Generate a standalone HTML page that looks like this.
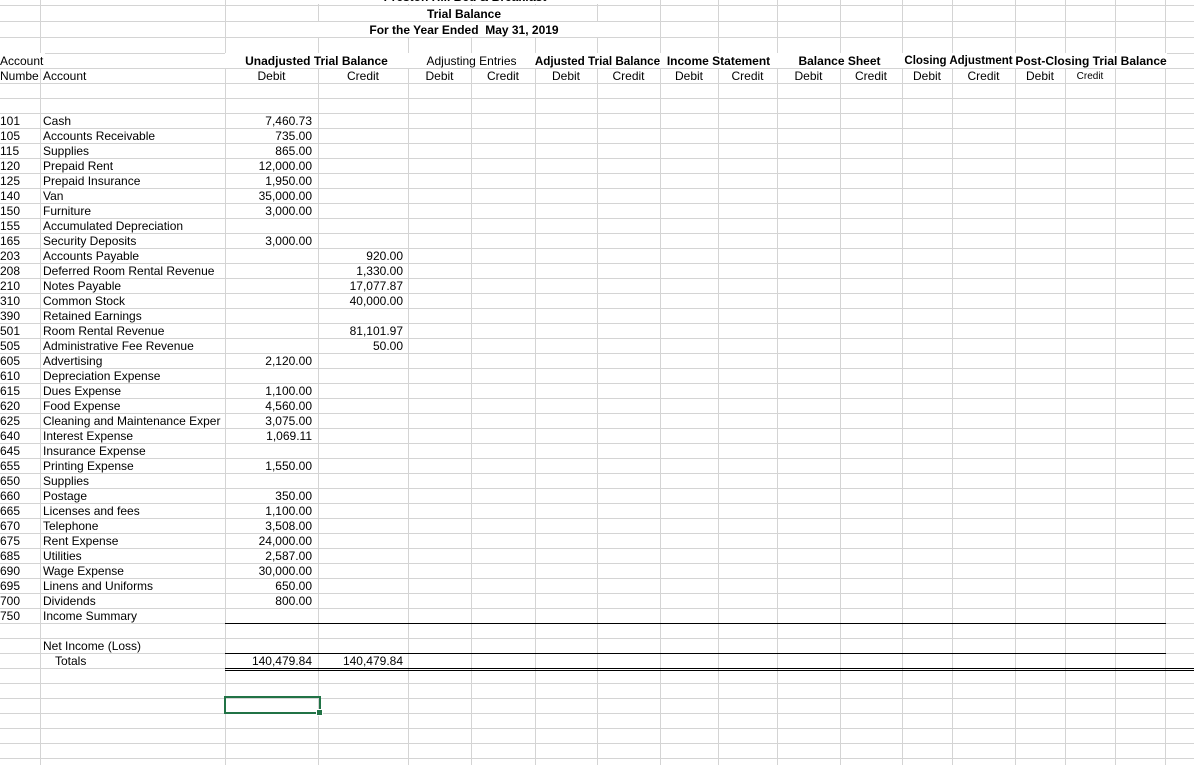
<!DOCTYPE html>
<html><head><meta charset="utf-8"><style>
body{margin:0;width:1194px;height:765px;overflow:hidden;background:#fff;font-family:"Liberation Sans",Arial,sans-serif;font-size:12px;color:#000;position:relative}
.h{position:absolute;left:0;width:1194px;height:1px;background:#d4d4d4}
.v{position:absolute;top:0;height:765px;width:1px;background:#d4d4d4}
.g{position:absolute;left:0;top:53px;width:1194px;height:712px;background:repeating-linear-gradient(to bottom,#d4d4d4 0 1px,transparent 1px 15px)}
.t{position:absolute;height:15px;line-height:17px;white-space:nowrap}
.r{text-align:right}.c{text-align:center}.b{font-weight:bold}
.k{position:absolute;height:1px;background:#000}
</style></head><body>
<div class="g"></div>
<div class="h" style="top:5px"></div><div class="h" style="top:21px"></div><div class="h" style="top:37px"></div>
<div class="v" style="left:40px"></div><div class="v" style="left:225px"></div><div class="v" style="left:318px"></div><div class="v" style="left:408px"></div><div class="v" style="left:471px"></div><div class="v" style="left:535px"></div><div class="v" style="left:597px"></div><div class="v" style="left:660px"></div><div class="v" style="left:718px"></div><div class="v" style="left:777px"></div><div class="v" style="left:840px"></div><div class="v" style="left:902px"></div><div class="v" style="left:952px"></div><div class="v" style="left:1015px"></div><div class="v" style="left:1065px"></div><div class="v" style="left:1115px"></div><div class="v" style="left:1165px"></div>

<div class="t b c" style="left:300px;width:330px;top:-11px;background:#fff">Preston Hill Bed &amp; Breakfast</div>
<div class="t b c" style="left:364px;width:200px;top:6px;background:#fff">Trial Balance</div>
<div class="t b c" style="left:314px;width:300px;top:22px;background:#fff">For the Year Ended&nbsp; May 31, 2019</div>

<div class="t" style="left:0;top:53px;background:#fff;padding-right:2px">Account</div>
<div class="t" style="left:0;top:68px">Numbe</div><div class="t" style="left:43px;top:68px">Account</div>
<div class="t b c" style="left:225px;width:183px;top:53px;background:#fff">Unadjusted Trial Balance</div>
<div class="t c" style="left:225px;width:93px;top:68px">Debit</div><div class="t c" style="left:318px;width:90px;top:68px">Credit</div>
<div class="t c" style="left:408px;width:127px;top:53px;background:#fff">Adjusting Entries</div>
<div class="t b c" style="left:531px;width:133px;top:53px;background:#fff;font-size:11.7px">Adjusted Trial Balance</div>
<div class="t b c" style="left:660px;width:117px;top:53px;background:#fff">Income Statement</div>
<div class="t b c" style="left:777px;width:125px;top:53px;background:#fff">Balance Sheet</div>
<div class="t b c" style="left:902px;width:113px;top:53px;background:#fff;font-size:11.5px">Closing Adjustment</div>
<div class="t b c" style="left:1015px;width:152px;top:53px;background:#fff">Post-Closing Trial Balance</div>
<div class="t c" style="left:408px;width:63px;top:68px">Debit</div><div class="t c" style="left:471px;width:64px;top:68px">Credit</div>
<div class="t c" style="left:535px;width:62px;top:68px">Debit</div><div class="t c" style="left:597px;width:63px;top:68px">Credit</div>
<div class="t c" style="left:660px;width:58px;top:68px">Debit</div><div class="t c" style="left:718px;width:59px;top:68px">Credit</div>
<div class="t c" style="left:777px;width:63px;top:68px">Debit</div><div class="t c" style="left:840px;width:62px;top:68px">Credit</div>
<div class="t c" style="left:902px;width:50px;top:68px">Debit</div><div class="t c" style="left:952px;width:63px;top:68px">Credit</div>
<div class="t c" style="left:1015px;width:50px;top:68px">Debit</div><div class="t c" style="left:1065px;width:50px;top:68px;font-size:10px">Credit</div>

<div class="t" style="left:0;top:113px">101</div><div class="t" style="left:43px;top:113px">Cash</div><div class="t r" style="left:225px;width:87px;top:113px">7,460.73</div>
<div class="t" style="left:0;top:128px">105</div><div class="t" style="left:43px;top:128px">Accounts Receivable</div><div class="t r" style="left:225px;width:87px;top:128px">735.00</div>
<div class="t" style="left:0;top:143px">115</div><div class="t" style="left:43px;top:143px">Supplies</div><div class="t r" style="left:225px;width:87px;top:143px">865.00</div>
<div class="t" style="left:0;top:158px">120</div><div class="t" style="left:43px;top:158px">Prepaid Rent</div><div class="t r" style="left:225px;width:87px;top:158px">12,000.00</div>
<div class="t" style="left:0;top:173px">125</div><div class="t" style="left:43px;top:173px">Prepaid Insurance</div><div class="t r" style="left:225px;width:87px;top:173px">1,950.00</div>
<div class="t" style="left:0;top:188px">140</div><div class="t" style="left:43px;top:188px">Van</div><div class="t r" style="left:225px;width:87px;top:188px">35,000.00</div>
<div class="t" style="left:0;top:203px">150</div><div class="t" style="left:43px;top:203px">Furniture</div><div class="t r" style="left:225px;width:87px;top:203px">3,000.00</div>
<div class="t" style="left:0;top:218px">155</div><div class="t" style="left:43px;top:218px">Accumulated Depreciation</div>
<div class="t" style="left:0;top:233px">165</div><div class="t" style="left:43px;top:233px">Security Deposits</div><div class="t r" style="left:225px;width:87px;top:233px">3,000.00</div>
<div class="t" style="left:0;top:248px">203</div><div class="t" style="left:43px;top:248px">Accounts Payable</div><div class="t r" style="left:318px;width:85px;top:248px">920.00</div>
<div class="t" style="left:0;top:263px">208</div><div class="t" style="left:43px;top:263px">Deferred Room Rental Revenue</div><div class="t r" style="left:318px;width:85px;top:263px">1,330.00</div>
<div class="t" style="left:0;top:278px">210</div><div class="t" style="left:43px;top:278px">Notes Payable</div><div class="t r" style="left:318px;width:85px;top:278px">17,077.87</div>
<div class="t" style="left:0;top:293px">310</div><div class="t" style="left:43px;top:293px">Common Stock</div><div class="t r" style="left:318px;width:85px;top:293px">40,000.00</div>
<div class="t" style="left:0;top:308px">390</div><div class="t" style="left:43px;top:308px">Retained Earnings</div>
<div class="t" style="left:0;top:323px">501</div><div class="t" style="left:43px;top:323px">Room Rental Revenue</div><div class="t r" style="left:318px;width:85px;top:323px">81,101.97</div>
<div class="t" style="left:0;top:338px">505</div><div class="t" style="left:43px;top:338px">Administrative Fee Revenue</div><div class="t r" style="left:318px;width:85px;top:338px">50.00</div>
<div class="t" style="left:0;top:353px">605</div><div class="t" style="left:43px;top:353px">Advertising</div><div class="t r" style="left:225px;width:87px;top:353px">2,120.00</div>
<div class="t" style="left:0;top:368px">610</div><div class="t" style="left:43px;top:368px">Depreciation Expense</div>
<div class="t" style="left:0;top:383px">615</div><div class="t" style="left:43px;top:383px">Dues Expense</div><div class="t r" style="left:225px;width:87px;top:383px">1,100.00</div>
<div class="t" style="left:0;top:398px">620</div><div class="t" style="left:43px;top:398px">Food Expense</div><div class="t r" style="left:225px;width:87px;top:398px">4,560.00</div>
<div class="t" style="left:0;top:413px">625</div><div class="t" style="left:43px;top:413px;width:181px;overflow:hidden">Cleaning and Maintenance Exper</div><div class="t r" style="left:225px;width:87px;top:413px">3,075.00</div>
<div class="t" style="left:0;top:428px">640</div><div class="t" style="left:43px;top:428px">Interest Expense</div><div class="t r" style="left:225px;width:87px;top:428px">1,069.11</div>
<div class="t" style="left:0;top:443px">645</div><div class="t" style="left:43px;top:443px">Insurance Expense</div>
<div class="t" style="left:0;top:458px">655</div><div class="t" style="left:43px;top:458px">Printing Expense</div><div class="t r" style="left:225px;width:87px;top:458px">1,550.00</div>
<div class="t" style="left:0;top:473px">650</div><div class="t" style="left:43px;top:473px">Supplies</div>
<div class="t" style="left:0;top:488px">660</div><div class="t" style="left:43px;top:488px">Postage</div><div class="t r" style="left:225px;width:87px;top:488px">350.00</div>
<div class="t" style="left:0;top:503px">665</div><div class="t" style="left:43px;top:503px">Licenses and fees</div><div class="t r" style="left:225px;width:87px;top:503px">1,100.00</div>
<div class="t" style="left:0;top:518px">670</div><div class="t" style="left:43px;top:518px">Telephone</div><div class="t r" style="left:225px;width:87px;top:518px">3,508.00</div>
<div class="t" style="left:0;top:533px">675</div><div class="t" style="left:43px;top:533px">Rent Expense</div><div class="t r" style="left:225px;width:87px;top:533px">24,000.00</div>
<div class="t" style="left:0;top:548px">685</div><div class="t" style="left:43px;top:548px">Utilities</div><div class="t r" style="left:225px;width:87px;top:548px">2,587.00</div>
<div class="t" style="left:0;top:563px">690</div><div class="t" style="left:43px;top:563px">Wage Expense</div><div class="t r" style="left:225px;width:87px;top:563px">30,000.00</div>
<div class="t" style="left:0;top:578px">695</div><div class="t" style="left:43px;top:578px">Linens and Uniforms</div><div class="t r" style="left:225px;width:87px;top:578px">650.00</div>
<div class="t" style="left:0;top:593px">700</div><div class="t" style="left:43px;top:593px">Dividends</div><div class="t r" style="left:225px;width:87px;top:593px">800.00</div>
<div class="t" style="left:0;top:608px">750</div><div class="t" style="left:43px;top:608px">Income Summary</div>
<div class="t" style="left:43px;top:638px">Net Income (Loss)</div>
<div class="t" style="left:55px;top:653px">Totals</div><div class="t r" style="left:225px;width:87px;top:653px">140,479.84</div><div class="t r" style="left:318px;width:85px;top:653px">140,479.84</div>

<div class="k" style="left:225px;width:941px;top:623px"></div>
<div class="k" style="left:225px;width:941px;top:653px"></div>
<div class="k" style="left:225px;width:969px;top:668px"></div>
<div class="k" style="left:225px;width:969px;top:670px"></div>
<div style="position:absolute;left:224px;top:696px;width:93px;height:14px;border:2px solid #217346"></div>
<div style="position:absolute;left:316px;top:709px;width:5px;height:5px;background:#217346;border:1px solid #fff"></div>
</body></html>
